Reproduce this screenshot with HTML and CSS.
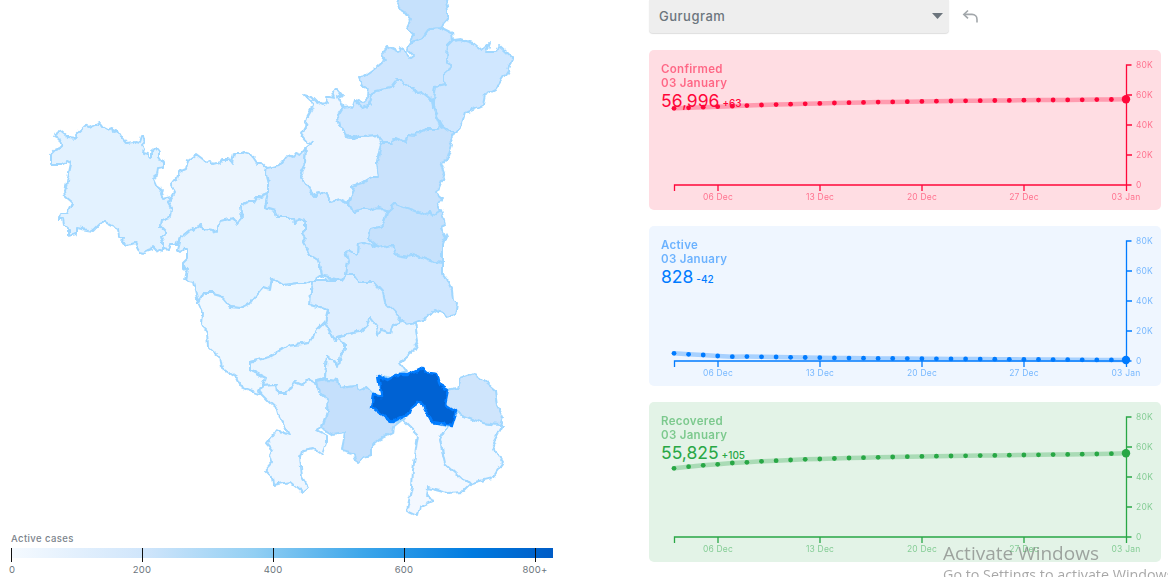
FILE: index.html
```html
<!DOCTYPE html>
<html lang="en">
<head>
<meta charset="utf-8">
<title>Gurugram</title>
<link rel="stylesheet" href="styles.css">
</head>
<body>
<main class="page">
  <section class="map-col">
    <svg class="map" viewBox="0 0 600 533" width="600" height="533" role="img" aria-label="Haryana districts">
      <defs>
        <filter id="rough" filterUnits="userSpaceOnUse" x="0" y="-10" width="600" height="543">
          <feTurbulence type="fractalNoise" baseFrequency="0.13" numOctaves="2" seed="4" result="n"/>
          <feDisplacementMap in="SourceGraphic" in2="n" scale="6" xChannelSelector="R" yChannelSelector="G"/>
        </filter>
      </defs>
      <g class="districts">
      <polygon class="d" fill="#e3f2ff" points="59,130 68,137 77,138 76,134 84,126 89,128 100,123 103,127 107,129 112,127 113,131 117,130 121,137 127,144 133,143 135,141 139,142 141,136 143,136 145,143 142,146 144,149 143,153 148,154 150,159 152,158 152,152 157,148 159,151 159,157 163,163 163,167 158,168 157,175 153,178 156,185 162,189 161,194 163,199 172,197 168,203 171,208 170,217 162,220 161,227 166,232 161,236 163,243 163,252 157,250 153,246 152,249 146,251 145,253 140,252 135,243 128,245 122,243 123,237 119,237 118,229 105,222 100,224 93,231 87,230 77,228 77,234 69,236 69,229 64,225 63,219 59,219 60,213 67,213 72,202 66,197 65,190 67,182 71,163 67,161 62,165 51,165 51,154 55,150 60,148 63,145 61,140 55,137"/>
      <polygon class="d" fill="#ecf5fe" points="196,154 204,160 206,163 211,161 213,165 220,163 222,160 230,160 232,163 234,153 242,153 244,152 251,154 257,163 262,163 267,168 266,173 268,183 268,192 265,193 262,198 257,197 254,202 248,202 240,206 241,213 243,217 237,224 233,218 220,221 217,228 217,233 213,230 203,229 202,224 197,227 193,230 191,229 180,238 177,245 170,245 168,249 163,248 163,243 161,236 166,232 161,227 162,220 170,217 171,208 168,203 172,197 175,192 171,185 177,178 179,172 186,169 188,160"/>
      <polygon class="d" fill="#e3f2ff" points="180,238 191,229 193,230 197,227 202,224 203,229 213,230 217,233 217,228 220,221 233,218 237,224 243,217 241,213 240,206 248,202 254,202 257,197 262,198 265,193 268,192 265,207 275,210 277,217 287,217 295,223 298,219 305,222 305,230 302,233 306,238 303,243 310,255 318,260 321,270 322,275 315,280 312,280 305,283 300,283 283,285 272,278 270,290 262,288 250,303 240,308 230,307 220,295 213,293 203,293 198,302 195,290 193,282 185,280 187,270 183,268 183,263 188,258 188,248 185,248 180,252 177,250"/>
      <polygon class="d" fill="#d8ebff" points="267,168 280,165 288,155 292,157 295,153 300,155 306,148 305,163 300,173 305,183 315,197 318,192 327,194 330,202 340,199 348,203 353,212 363,209 370,211 378,208 387,212 383,225 371,228 368,238 377,247 365,242 358,243 357,255 348,250 345,251 348,262 346,275 342,280 323,277 322,275 321,270 318,260 310,255 303,243 306,238 302,233 305,230 305,222 298,219 295,223 287,217 277,217 275,210 265,207 268,192 268,183 266,173"/>
      <polygon class="d" fill="#eef6ff" points="305,95 312,102 313,106 307,117 305,127 301,134 307,142 312,143 306,148 305,163 300,173 305,183 315,197 318,192 327,194 330,202 340,199 348,203 355,188 352,186 362,183 372,177 379,177 377,162 381,145 377,135 360,136 353,138 346,137 343,128 339,125 337,117 343,107 338,97 342,95 337,89 333,92 335,98 330,97 325,97 327,102 323,105 317,102 312,97"/>
      <polygon class="d" fill="#d2e8ff" points="343,107 350,106 352,109 355,100 363,108 368,106 372,97 375,91 390,88 397,79 402,79 408,87 413,87 417,94 422,93 432,101 433,108 440,125 439,129 427,129 417,133 415,136 408,135 405,142 395,138 392,143 383,143 377,135 360,136 353,138 346,137 343,128 339,125 337,117"/>
      <polygon class="d" fill="#cfe6fe" points="358,76 363,77 377,67 385,60 381,55 388,47 398,52 400,47 405,50 408,59 413,55 408,50 410,43 423,38 430,28 440,27 452,33 453,40 448,45 447,60 451,68 443,75 443,80 446,85 435,87 433,101 432,101 422,93 417,94 413,87 408,87 402,79 397,79 390,88 375,91 372,97 368,106 363,108 355,100 363,102 370,95 363,87"/>
      <polygon class="d" fill="#c6e1fc" points="397,4 399,-4 445,-4 448,10 448,18 440,27 430,28 423,38 410,43 413,33 407,28 411,20 404,11 399,8"/>
      <polygon class="d" fill="#d0e7ff" points="453,40 460,39 473,43 482,50 490,43 487,52 497,52 499,46 512,58 508,70 495,90 485,95 483,105 465,113 462,123 455,132 450,132 442,125 433,108 433,101 435,87 446,85 443,80 443,75 451,68 447,60 448,45"/>
      <polygon class="d" fill="#c9e2fc" points="381,145 383,143 392,143 395,138 405,142 408,135 415,136 417,133 427,129 439,129 440,125 450,132 455,132 450,140 452,145 447,160 441,162 445,173 438,190 435,192 442,198 437,205 441,213 432,216 430,211 427,215 410,209 395,204 390,211 378,208 370,211 363,209 353,212 348,203 355,188 352,186 362,183 372,177 379,177 377,162"/>
      <polygon class="d" fill="#c6e1fc" points="395,204 410,209 427,215 430,211 432,216 441,210 443,217 445,225 441,227 446,237 443,245 443,263 433,262 410,253 407,257 395,255 392,245 380,248 368,238 371,228 383,225 387,212"/>
      <polygon class="d" fill="#d0e7ff" points="345,251 348,250 357,255 358,243 365,242 377,247 380,248 392,245 395,255 407,257 410,253 433,262 443,263 443,275 447,280 452,290 453,300 457,303 456,310 455,315 447,317 442,313 435,310 427,318 415,323 407,325 402,322 395,312 385,302 383,293 373,282 360,282 355,275 346,275 348,262"/>
      <polygon class="d" fill="#deeeff" points="312,280 342,280 346,275 355,275 360,282 373,282 383,293 385,302 395,312 402,322 407,325 393,325 390,333 382,330 378,335 377,327 370,318 367,325 360,332 352,333 337,337 335,342 332,335 325,322 328,310 310,305 311,290"/>
      <polygon class="d" fill="#f0f8ff" points="198,302 203,293 213,293 220,295 230,307 240,308 250,303 262,288 270,290 272,278 283,285 300,283 305,283 312,280 311,290 310,305 328,310 325,322 317,330 310,343 288,346 270,357 250,362 250,370 265,378 262,386 258,394 242,388 237,378 222,368 220,358 208,347 207,332 202,323 203,313"/>
      <polygon class="d" fill="#eaf5ff" points="325,322 332,335 335,342 337,337 345,343 345,350 340,355 338,367 333,360 327,355 325,378 317,380 317,385 308,380 302,385 295,382 287,393 278,393 277,385 262,386 265,378 250,370 250,362 270,357 288,346 310,343 317,330"/>
      <polygon class="d" fill="#e8f4ff" points="337,337 352,333 360,332 367,325 370,318 377,327 378,335 382,330 390,333 393,325 402,322 407,325 415,323 418,342 412,352 400,362 407,372 397,375 390,378 378,375 380,388 382,397 373,393 367,387 360,390 357,386 340,388 338,380 327,379 317,381 325,378 327,355 333,360 338,367 340,355 345,350 345,343"/>
      <polygon class="d" fill="#eef6ff" points="262,386 277,385 278,393 287,393 295,382 302,385 308,380 317,385 320,393 328,398 327,413 322,428 317,430 327,435 327,443 323,455 313,448 302,450 300,457 302,477 308,487 302,492 290,482 273,485 272,477 265,470 272,462 270,455 273,450 267,443 277,430 289,435 280,417 278,410 270,403 260,393"/>
      <polygon class="d" fill="#c5e0fc" points="317,381 327,379 338,380 340,388 357,386 360,390 367,387 373,393 372,405 387,418 392,422 402,420 393,427 392,433 378,440 372,445 372,455 363,457 357,463 353,453 342,450 343,443 345,433 333,435 322,428 327,413 328,398 320,393"/>
      <polygon class="d" fill="#f3f8ff" points="403,420 412,407 418,403 423,405 432,422 448,426 440,440 445,463 463,480 472,483 463,492 447,493 428,488 427,497 435,500 420,507 418,515 407,510 412,487 413,470 418,435"/>
      <polygon class="d" fill="#f0f7ff" points="448,426 457,413 483,423 503,425 493,443 498,455 503,463 492,478 472,483 463,480 445,463 440,440"/>
      <polygon class="d" fill="#cfe5fc" points="447,390 457,388 460,378 473,373 483,380 495,390 497,405 503,417 500,425 483,423 457,413 445,405"/>
      <polygon class="d-active" points="378,375 388,380 397,375 408,375 423,368 428,372 437,373 440,385 448,390 445,405 456,412 452,425 432,422 423,405 418,403 412,407 410,413 392,422 374,408 371,407 373,395 382,397 380,388"/>
      </g>
    </svg>
    <div class="legend">
      <div class="legend-title">Active cases</div>
      <div class="legend-bar"></div>
      <div class="legend-ticks"><i></i><i></i><i></i><i></i><i></i></div>
      <div class="legend-labels"><span><b>0</b></span><span><b>200</b></span><span><b>400</b></span><span><b>600</b></span><span><b>800+</b></span></div>
    </div>
  </section>

  <section class="side-col">
    <div class="toolbar">
      <div class="select">
        <span>Gurugram</span>
        <svg class="caret" viewBox="0 0 11 6" width="11" height="6"><polygon points="0,0 11,0 5.5,6"/></svg>
      </div>
      <svg class="undo" viewBox="0 0 18 15" width="18" height="15" fill="none" stroke="#a2a7ab" stroke-width="1.6"><path d="M6 1.5 1.8 5.4 6 9.3"/><path d="M2 5.4h8c3 0 5 2.2 5 5v3"/></svg>
    </div>

    <article class="card red">
      <svg class="chart" viewBox="0 0 512 160" width="512" height="160">
        <defs><marker id="dr" markerUnits="userSpaceOnUse" markerWidth="6" markerHeight="6" refX="3" refY="3"><circle cx="3" cy="3" r="2.4" fill="#ff073a"/></marker></defs>
        <polyline class="trend" marker-start="url(#dr)" marker-mid="url(#dr)" points="25,58.3 39.6,57.8 54.2,57.2 68.7,56.7 83.3,56.2 97.9,55.6 112.5,55 127.1,54.6 141.6,54.2 156.2,53.8 170.8,53.4 185.4,53 200,52.7 214.5,52.4 229.1,52.1 243.7,51.9 258.3,51.7 272.9,51.4 287.4,51.2 302,51 316.6,50.8 331.2,50.7 345.8,50.5 360.3,50.4 374.9,50.2 389.5,50.1 404.1,50 418.7,49.9 433.2,49.8 447.8,49.6 462.4,49.5 477,49.3"/>
        <circle class="end" cx="477" cy="49.3" r="4.2"/>
        <path class="axis" d="M25.5 141v-6h453M482.5 15h-5v120h5M477.5 135v6M69 135v6M171 135v6M273 135v6M375 135v6M483 45h-5M483 75h-5M483 105h-5"/>
        <g class="ylab"><text x="487" y="18">80K</text><text x="487" y="48">60K</text><text x="487" y="78">40K</text><text x="487" y="108">20K</text><text x="487" y="138">0</text></g>
        <g class="xlab"><text x="69" y="150">06 Dec</text><text x="171" y="150">13 Dec</text><text x="273" y="150">20 Dec</text><text x="375" y="150">27 Dec</text><text x="477" y="150">03 Jan</text></g>
      </svg>
      <div class="stats"><h5>Confirmed</h5><h6>03 January</h6><p class="num">56,996<small>+63</small></p></div>
    </article>

    <article class="card blue">
      <svg class="chart" viewBox="0 0 512 160" width="512" height="160">
        <defs><marker id="db" markerUnits="userSpaceOnUse" markerWidth="6" markerHeight="6" refX="3" refY="3"><circle cx="3" cy="3" r="2.4" fill="#007bff"/></marker></defs>
        <polyline class="trend" marker-start="url(#db)" marker-mid="url(#db)" points="25,127.3 39.6,128.3 54.2,129 68.7,130 83.3,130.7 97.9,130.6 112.5,130.8 127.1,131 141.6,131.3 156.2,131.5 170.8,131.7 185.4,131.9 200,132.1 214.5,132.2 229.1,132.4 243.7,132.5 258.3,132.6 272.9,132.7 287.4,132.8 302,132.9 316.6,133 331.2,133.1 345.8,133.2 360.3,133.3 374.9,133.4 389.5,133.5 404.1,133.6 418.7,133.7 433.2,133.8 447.8,133.9 462.4,133.9 477,134"/>
        <circle class="end" cx="477" cy="134" r="4.2"/>
        <path class="axis" d="M25.5 141v-6h453M482.5 15h-5v120h5M477.5 135v6M69 135v6M171 135v6M273 135v6M375 135v6M483 45h-5M483 75h-5M483 105h-5"/>
        <g class="ylab"><text x="487" y="18">80K</text><text x="487" y="48">60K</text><text x="487" y="78">40K</text><text x="487" y="108">20K</text><text x="487" y="138">0</text></g>
        <g class="xlab"><text x="69" y="150">06 Dec</text><text x="171" y="150">13 Dec</text><text x="273" y="150">20 Dec</text><text x="375" y="150">27 Dec</text><text x="477" y="150">03 Jan</text></g>
      </svg>
      <div class="stats"><h5>Active</h5><h6>03 January</h6><p class="num">828<small>-42</small></p></div>
    </article>

    <article class="card green">
      <svg class="chart" viewBox="0 0 512 160" width="512" height="160">
        <defs><marker id="dg" markerUnits="userSpaceOnUse" markerWidth="6" markerHeight="6" refX="3" refY="3"><circle cx="3" cy="3" r="2.4" fill="#28a745"/></marker></defs>
        <polyline class="trend" marker-start="url(#dg)" marker-mid="url(#dg)" points="25,66.3 39.6,64.7 54.2,63.3 68.7,62.3 83.3,61 97.9,60.3 112.5,59.3 127.1,58.7 141.6,58 156.2,57.3 170.8,57 185.4,56.5 200,56 214.5,55.7 229.1,55.3 243.7,55 258.3,54.7 272.9,54.4 287.4,54.2 302,54 316.6,53.8 331.2,53.6 345.8,53.4 360.3,53.2 374.9,53 389.5,52.8 404.1,52.6 418.7,52.4 433.2,52.2 447.8,52 462.4,51.7 477,51.3"/>
        <circle class="end" cx="477" cy="51.3" r="4.2"/>
        <path class="axis" d="M25.5 141v-6h453M482.5 15h-5v120h5M477.5 135v6M69 135v6M171 135v6M273 135v6M375 135v6M483 45h-5M483 75h-5M483 105h-5"/>
        <g class="ylab"><text x="487" y="18">80K</text><text x="487" y="48">60K</text><text x="487" y="78">40K</text><text x="487" y="108">20K</text><text x="487" y="138">0</text></g>
        <g class="xlab"><text x="69" y="150">06 Dec</text><text x="171" y="150">13 Dec</text><text x="273" y="150">20 Dec</text><text x="375" y="150">27 Dec</text><text x="477" y="150">03 Jan</text></g>
      </svg>
      <div class="stats"><h5>Recovered</h5><h6>03 January</h6><p class="num">55,825<small>+105</small></p></div>
    </article>
  </section>
</main>
<div class="watermark"><div class="wm-big">Activate Windows</div><div class="wm-small">Go to Settings to activate Windows.</div></div>
</body>
</html>
```
FILE: styles.css
```css
* { box-sizing: border-box; }
html, body { margin: 0; height: 100%; overflow: hidden; background: #fff; }
body { font-family: Inter, "Liberation Sans", sans-serif; }

.page { display: flex; height: 577px; }

.map-col { width: 649px; flex: none; }
.map { display: block; overflow: hidden; }
.districts { filter: url(#rough); }
.d { stroke: #a0d7ff; stroke-width: 2; stroke-linejoin: round; }
.d-active { fill: #0062d3; stroke: #007bff; stroke-width: 2.6; stroke-linejoin: round; }

.legend { width: 542px; margin: 0 0 0 11px; }
.legend-title { font-size: 9.5px; line-height: 12px; font-weight: 500; letter-spacing: .4px; color: #7a828a; margin-bottom: 3px; }
.legend-bar { height: 10px; background: linear-gradient(to right, #f5faff 0, #cfe5fb 25%, #92cff3 45%, #3ca6ea 65%, #007be0 85%, #005cc6 100%); }
.legend-ticks { display: flex; height: 14px; margin-top: -10px; }
.legend-ticks i { width: 131px; flex: none; border-left: 1px solid #111; }
.legend-labels { display: flex; height: 12px; margin-top: 2px; }
.legend-labels span { width: 131px; flex: none; font-size: 9.5px; line-height: 12px; letter-spacing: .2px; color: #6c757d; }
.legend-labels b { display: inline-block; font-weight: 400; transform: translateX(-50%); }
.legend-labels span:first-child b { transform: translateX(-2px); }

.side-col { width: 512px; flex: none; display: flex; flex-direction: column; gap: 16px; }
.toolbar { display: flex; align-items: flex-start; gap: 13px; height: 34px; }
.select { width: 300px; height: 33px; display: flex; align-items: center; justify-content: space-between; padding: 0 6px 1px 10px; background: #eeeeee; border-radius: 0 0 4px 4px; box-shadow: 0 1px 1px #dedede; font-size: 13px; font-weight: 500; letter-spacing: .5px; color: #6c757d; }
.caret { fill: #6c757d; }
.undo { margin-top: 9px; }

.card { position: relative; height: 160px; border-radius: 5px; }
.chart { display: block; }
.stats { position: absolute; left: 12px; top: 12px; }
.stats h5, .stats h6 { margin: 0; font-size: 11.5px; line-height: 14px; font-weight: 600; letter-spacing: .3px; opacity: .55; }
.stats .num { margin: 0; font-size: 17.5px; line-height: 22px; font-weight: 400; white-space: nowrap; }
.stats small { font-size: 10px; font-weight: 500; margin-left: 3px; }

.trend { fill: none; stroke-width: 4.5; stroke-opacity: .3; }
.axis { fill: none; stroke-width: 1.3; }
.ylab text { font-size: 8.5px; letter-spacing: .2px; opacity: .5; }
.xlab text { font-size: 8.5px; letter-spacing: .2px; opacity: .5; text-anchor: middle; }

.red { background: #ffdde3; color: #ff073a; }
.red .trend, .red .axis { stroke: #ff073a; }
.red .end, .red text { fill: #ff073a; }
.blue { background: #eff6ff; color: #007bff; }
.blue .trend, .blue .axis { stroke: #007bff; }
.blue .end, .blue text { fill: #007bff; }
.green { background: #e3f3e7; color: #28a745; }
.green .trend, .green .axis { stroke: #28a745; }
.green .end, .green text { fill: #28a745; }

.watermark { position: fixed; left: 943px; top: 541px; white-space: nowrap; font-family: "Open Sans", sans-serif; color: rgba(110, 110, 110, .6); }
.wm-big { font-size: 19px; line-height: 25px; }
.wm-small { font-size: 14.3px; line-height: 18px; }
```
